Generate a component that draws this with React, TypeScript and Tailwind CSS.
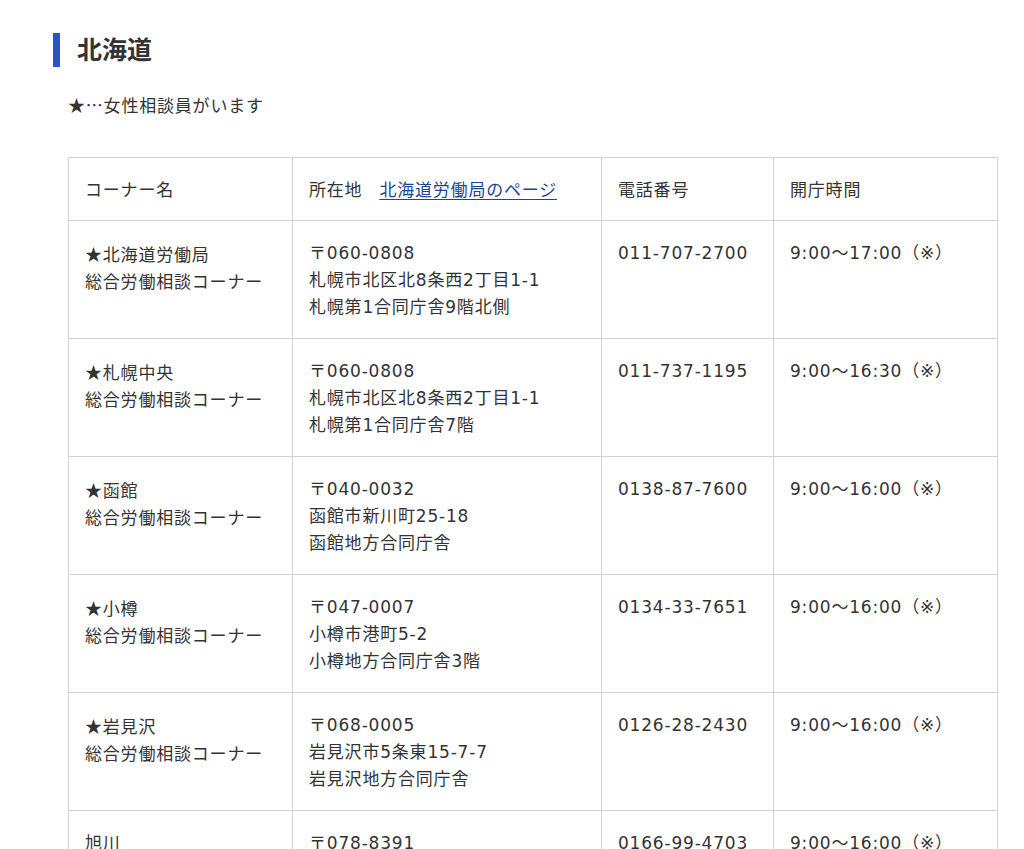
import type { ReactNode } from 'react';

const rows = [
  {
    star: true,
    name: ['北海道労働局', '総合労働相談コーナー'],
    addr: ['〒060-0808', '札幌市北区北8条西2丁目1-1', '札幌第1合同庁舎9階北側'],
    tel: '011-707-2700',
    hours: '9:00～17:00（※）',
  },
  {
    star: true,
    name: ['札幌中央', '総合労働相談コーナー'],
    addr: ['〒060-0808', '札幌市北区北8条西2丁目1-1', '札幌第1合同庁舎7階'],
    tel: '011-737-1195',
    hours: '9:00～16:30（※）',
  },
  {
    star: true,
    name: ['函館', '総合労働相談コーナー'],
    addr: ['〒040-0032', '函館市新川町25-18', '函館地方合同庁舎'],
    tel: '0138-87-7600',
    hours: '9:00～16:00（※）',
  },
  {
    star: true,
    name: ['小樽', '総合労働相談コーナー'],
    addr: ['〒047-0007', '小樽市港町5-2', '小樽地方合同庁舎3階'],
    tel: '0134-33-7651',
    hours: '9:00～16:00（※）',
  },
  {
    star: true,
    name: ['岩見沢', '総合労働相談コーナー'],
    addr: ['〒068-0005', '岩見沢市5条東15-7-7', '岩見沢地方合同庁舎'],
    tel: '0126-28-2430',
    hours: '9:00～16:00（※）',
  },
  {
    star: false,
    name: ['旭川', '総合労働相談コーナー'],
    addr: ['〒078-8391', '旭川市宮前1条3丁目3-15', '旭川合同庁舎西館6階'],
    tel: '0166-99-4703',
    hours: '9:00～16:00（※）',
  },
];

const cjk = { fontFamily: '"Noto Sans CJK JP", sans-serif' };

// full-width symbols should come from the CJK font, not DejaVu
const Sym = ({ children }: { children: ReactNode }) => <span style={cjk}>{children}</span>;

const base = 'border border-[#cfd2d8] px-[16px] pt-[19px] align-top text-left font-normal';
const th = `${base} pb-[16px]`;
const td = `${base} pb-[17px]`;

export default function App() {
  return (
    <div
      className="min-h-screen bg-white text-[#333] pl-[53px] pt-[33px] tracking-[0.8px]"
      style={{ fontFamily: '"DejaVu Sans", "Noto Sans CJK JP", sans-serif' }}
    >
      <h2 className="flex items-center gap-[17px] h-[34px]">
        <span className="block w-[7px] h-[34px] bg-[#2a52c9]" />
        <span className="text-[25px] font-bold leading-none text-[#333] mb-[4px] tracking-normal" style={cjk}>
          北海道
        </span>
      </h2>
      <p className="mt-[24px] ml-[15px] text-[17px] leading-[27px]">
        <Sym>★⋯</Sym>女性相談員がいます
      </p>
      <table className="mt-[37px] ml-[15px] border-collapse text-[17px] leading-[27px] w-[929px] table-fixed">
        <colgroup>
          <col className="w-[224px]" />
          <col className="w-[309px]" />
          <col className="w-[172px]" />
          <col className="w-[224px]" />
        </colgroup>
        <thead>
          <tr>
            <th className={th}>コーナー名</th>
            <th className={th}>
              所在地
              <a href="#" className="ml-[17px] text-[#1d4595] underline underline-offset-[3px]">
                北海道労働局のページ
              </a>
            </th>
            <th className={th}>電話番号</th>
            <th className={th}>開庁時間</th>
          </tr>
        </thead>
        <tbody>
          {rows.map((r, i) => (
            <tr key={i}>
              <td className={td}>
                <div>
                  {r.star && <Sym>★</Sym>}
                  {r.name[0]}
                </div>
                <div>{r.name[1]}</div>
              </td>
              <td className={td}>
                {r.addr.map((l, j) => (
                  <div key={j}>{l}</div>
                ))}
              </td>
              <td className={td}>{r.tel}</td>
              <td className={td}>{r.hours}</td>
            </tr>
          ))}
        </tbody>
      </table>
    </div>
  );
}
